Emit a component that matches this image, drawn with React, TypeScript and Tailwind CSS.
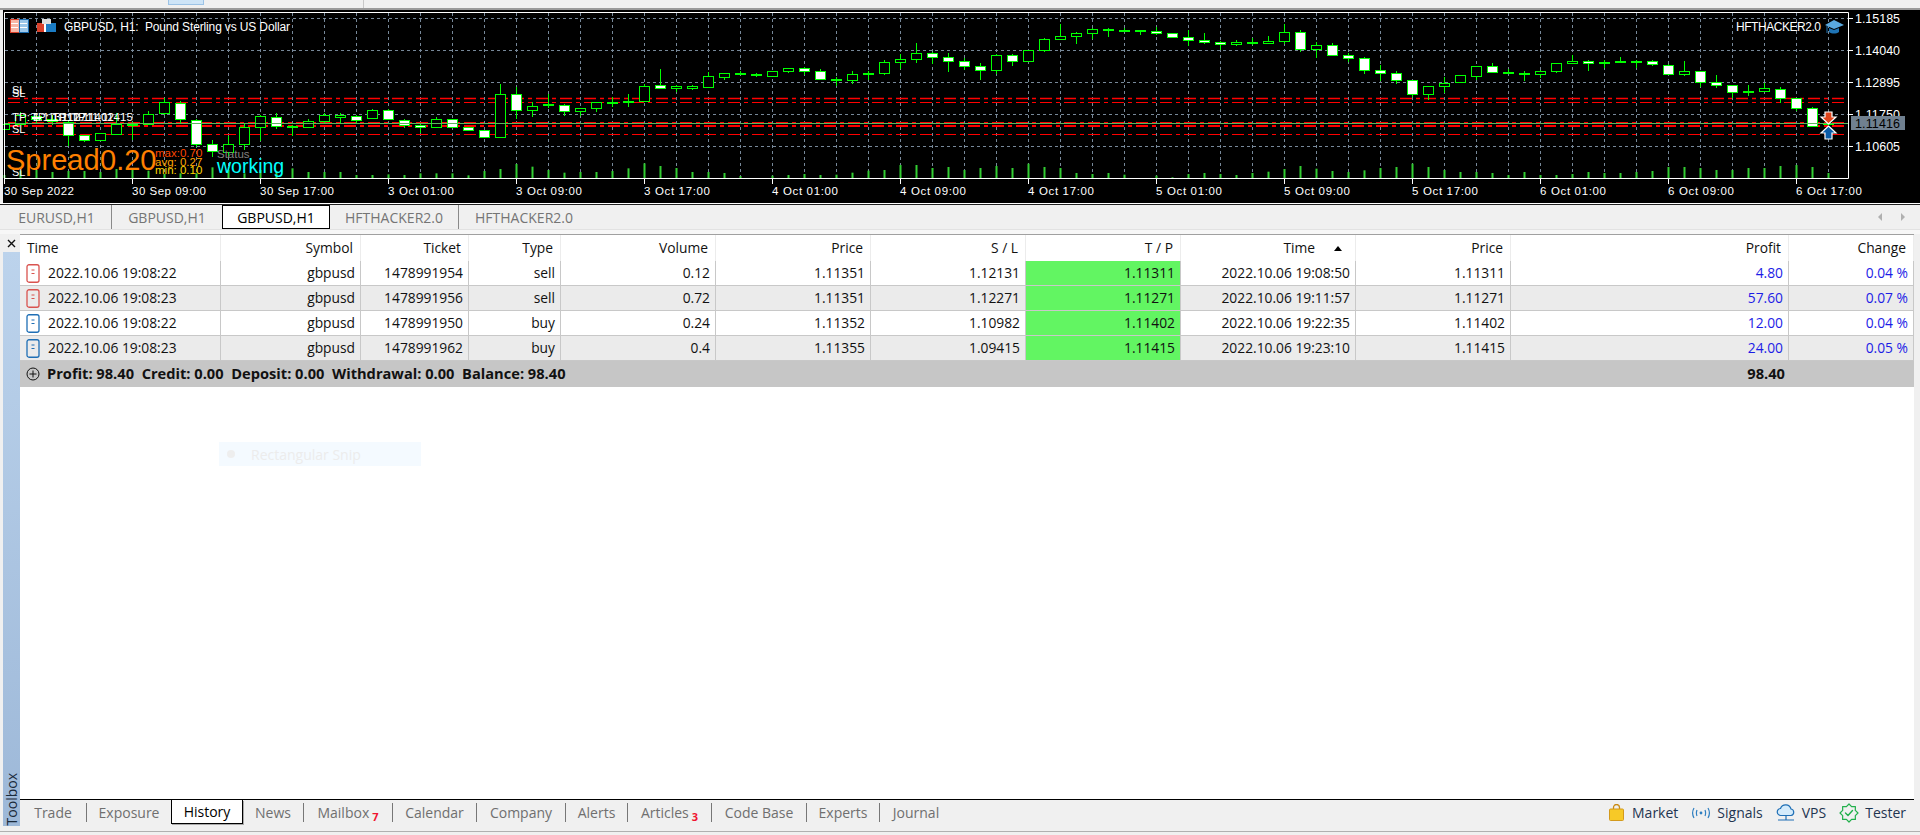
// candle data as read off the chart: [top, bottom, high, low, white], in 1/3 px
const candles: number[][] = [
  [372, 388, 372, 388, 0], [345, 372, 335, 372, 0], [347, 358, 340, 370, 1], [358, 364, 345, 375, 1], [365, 406, 362, 437, 1],
  [406, 421, 404, 426, 1], [400, 421, 398, 423, 0], [372, 401, 340, 405, 0], [372, 374, 365, 420, 0], [341, 373, 333, 376, 0],
  [307, 340, 295, 345, 0], [308, 358, 303, 372, 1], [359, 433, 357, 440, 1], [433, 454, 420, 470, 1], [433, 455, 408, 470, 0],
  [380, 433, 372, 450, 0], [349, 380, 345, 422, 0], [350, 379, 340, 387, 1], [379, 382, 375, 407, 0], [364, 382, 358, 385, 0],
  [346, 364, 340, 368, 0], [346, 350, 340, 368, 0], [349, 361, 345, 372, 1], [331, 355, 328, 358, 0], [331, 358, 328, 360, 1],
  [359, 376, 357, 383, 1], [376, 382, 372, 400, 1], [358, 382, 352, 384, 0], [358, 382, 356, 384, 1], [382, 391, 380, 393, 1],
  [391, 412, 390, 414, 1], [281, 412, 253, 414, 0], [281, 331, 262, 358, 1], [317, 331, 305, 352, 0], [313, 316, 283, 325, 0],
  [314, 334, 312, 347, 1], [325, 334, 325, 348, 0], [307, 325, 305, 336, 0], [306, 308, 290, 320, 0], [304, 307, 283, 322, 0],
  [257, 302, 252, 304, 0], [256, 263, 208, 266, 1], [258, 263, 254, 276, 0], [258, 263, 254, 270, 0], [229, 262, 217, 264, 0],
  [220, 230, 218, 240, 0], [219, 221, 214, 224, 0], [222, 224, 219, 231, 0], [214, 227, 212, 231, 0], [205, 214, 204, 218, 0],
  [205, 214, 202, 224, 1], [214, 238, 208, 240, 1], [238, 240, 232, 258, 0], [223, 239, 213, 251, 0], [220, 223, 213, 241, 0],
  [187, 220, 181, 224, 0], [178, 187, 163, 206, 0], [160, 178, 129, 189, 0], [160, 172, 155, 192, 1], [172, 184, 159, 216, 1],
  [184, 199, 175, 210, 1], [199, 211, 189, 240, 1], [166, 211, 163, 223, 0], [166, 184, 162, 197, 1], [151, 184, 150, 187, 0],
  [118, 151, 114, 155, 0], [109, 118, 73, 120, 0], [100, 109, 96, 132, 0], [88, 100, 84, 116, 0], [87, 91, 85, 110, 0],
  [90, 92, 84, 96, 0], [90, 92, 90, 105, 0], [94, 100, 82, 106, 1], [100, 112, 100, 113, 1], [112, 121, 90, 138, 1],
  [121, 127, 99, 131, 1], [127, 133, 124, 150, 1], [127, 133, 121, 137, 0], [127, 128, 113, 136, 0], [124, 128, 108, 129, 0],
  [95, 124, 72, 133, 0], [95, 148, 91, 157, 1], [136, 148, 125, 174, 0], [136, 166, 130, 168, 1], [166, 175, 160, 187, 1],
  [175, 211, 172, 222, 1], [211, 220, 195, 243, 1], [220, 241, 213, 251, 1], [241, 283, 240, 292, 1], [259, 283, 259, 300, 0],
  [248, 259, 232, 278, 0], [226, 247, 225, 249, 0], [199, 227, 199, 241, 0], [199, 217, 190, 218, 1], [216, 218, 208, 222, 0],
  [220, 223, 214, 243, 0], [214, 223, 210, 235, 0], [190, 214, 190, 219, 0], [184, 190, 166, 192, 0], [184, 190, 181, 213, 1],
  [186, 190, 181, 205, 0], [184, 187, 172, 190, 0], [182, 185, 181, 205, 0], [182, 193, 180, 197, 1], [194, 223, 191, 226, 1],
  [214, 223, 183, 228, 0], [214, 247, 212, 260, 1], [247, 256, 226, 263, 1], [256, 277, 255, 293, 1], [274, 277, 256, 288, 0],
  [265, 274, 248, 276, 0], [266, 295, 262, 310, 1], [295, 325, 295, 334, 1], [325, 379, 322, 380, 1], [370, 372, 366, 376, 0],
]

const volumes = [
  525, 512, 510, 516, 513, 513, 516, 507, 505, 512, 522, 520, 520, 502, 510, 520, 510, 515, 505, 516,
  516, 516, 525, 525, 523, 525, 520, 520, 520, 526, 513, 507, 492, 500, 510, 518, 516, 516, 513, 505,
  490, 498, 504, 516, 516, 519, 528, 534, 527, 525, 522, 525, 524, 518, 512, 510, 495, 495, 504, 501,
  510, 504, 498, 504, 491, 501, 504, 519, 522, 519, 524, 534, 527, 532, 522, 519, 522, 525, 519, 515,
  507, 498, 506, 513, 516, 511, 504, 501, 491, 501, 510, 516, 516, 519, 525, 516, 525, 525, 522, 516,
  519, 519, 516, 513, 501, 501, 504, 510, 510, 504, 504, 498, 495, 501, 519,
]

const timeLabels = [
  "30 Sep 2022", "30 Sep 09:00", "30 Sep 17:00", "3 Oct 01:00", "3 Oct 09:00", "3 Oct 17:00", "4 Oct 01:00", "4 Oct 09:00",
  "4 Oct 17:00", "5 Oct 01:00", "5 Oct 09:00", "5 Oct 17:00", "6 Oct 01:00", "6 Oct 09:00", "6 Oct 17:00",
]

const priceLabels = [
  { y: 18.5, text: "1.15185" },
  { y: 50.5, text: "1.14040" },
  { y: 82.5, text: "1.12895" },
  { y: 114.5, text: "1.11750" },
  { y: 146.5, text: "1.10605" },
]

function barX(i: number) {
  return 4.5 + 16 * i
}

function Chart() {
  const verticals = Array.from({ length: 58 }, (_, k) => 4.5 + 32 * k)
  return (
    <svg viewBox="3 10 1917 193" className="block h-[193px] w-[1917px] font-['Liberation_Sans',sans-serif]">
      <rect x="3" y="10" width="1917" height="193" fill="#000" />

      {/* grid */}
      {priceLabels.map((p) => (
        <line key={p.y} x1="5" x2="1848" y1={p.y} y2={p.y} stroke="#778899" strokeDasharray="3 3" />
      ))}
      {verticals.map((x) => (
        <line key={x} x1={x} x2={x} y1="13" y2="178" stroke="#778899" strokeDasharray="3 3" />
      ))}

      {/* volumes */}
      {volumes.map((v, i) => (
        <rect key={i} x={barX(i) - 1} y={v / 3} width="2" height={178 - v / 3} fill="#32cd32" />
      ))}

      {/* order levels */}
      <g stroke="#ff0000" strokeDasharray="12 4 4 4" fill="none">
        <line x1="8" x2="1847" y1="98.5" y2="98.5" strokeWidth="1.5" />
        <line x1="8" x2="1847" y1="102.5" y2="102.5" />
        <line x1="8" x2="1847" y1="123" y2="123" strokeWidth="2" />
        <line x1="8" x2="1847" y1="126" y2="126" strokeWidth="2" />
        <line x1="8" x2="1847" y1="134.5" y2="134.5" />
      </g>

      {/* candles */}
      {candles.map((c, i) => {
        const x = barX(i)
        const top = Math.round(c[0] / 3) + 0.5
        const bottom = Math.round(c[1] / 3) + 0.5
        return (
          <g key={i} stroke="#00ff00" shapeRendering="crispEdges">
            <line x1={x} x2={x} y1={c[2] / 3} y2={c[3] / 3} />
            <rect x={x - 5} y={top} width="10" height={bottom - top} fill={c[4] ? "#fff" : "#000"} strokeWidth="1.4" />
          </g>
        )
      })}
      <line x1="5" x2="1848" y1="123.5" y2="123.5" stroke="#5cb85c" />

      {/* frame */}
      <path d="M4.5 12.5H1848.5V178.5H4.5Z" fill="none" stroke="#fff" />
      {timeLabels.map((t, i) => (
        <g key={t}>
          <line x1={4.5 + 128 * i} x2={4.5 + 128 * i} y1="178" y2="184" stroke="#fff" />
          <text x={4 + 128 * i} y="194.5" fill="#fff" fontSize="11.5" textLength={t.length > 11 ? 74 : t.length === 11 && i === 0 ? 70 : 66}>
            {t}
          </text>
        </g>
      ))}
      {priceLabels.map((p) => (
        <g key={p.text}>
          <line x1="1849" x2="1853" y1={p.y} y2={p.y} stroke="#fff" />
          <text x="1855" y={p.y + 4.5} fill="#fff" fontSize="12.5" textLength="45">
            {p.text}
          </text>
        </g>
      ))}
      <rect x="1851" y="116" width="54" height="14" fill="#708090" />
      <text x="1855" y="127.5" fill="#000" fontSize="12.5" textLength="45">
        1.11416
      </text>

      {/* title */}
      <g shapeRendering="crispEdges">
        <rect x="10" y="19" width="9" height="13" fill="#f7b7a7" stroke="#d9402a" />
        <rect x="19" y="19" width="9" height="13" fill="#9cc7ea" stroke="#1b6cb0" />
        <path d="M11 23H18M11 27H18M20 23H27M20 27H27" stroke="#fff" />
        <rect x="37" y="23" width="7" height="9" fill="#d9402a" />
        <rect x="46" y="23" width="10" height="9" fill="#1b7cc4" />
        <rect x="42" y="19" width="9" height="5" fill="#ddd" />
        <rect x="44" y="24" width="2" height="8" fill="#fff" />
      </g>
      <text x="64" y="31" fill="#fff" fontSize="12" xmlSpace="preserve" textLength="226">
        GBPUSD, H1:  Pound Sterling vs US Dollar
      </text>
      <text x="1736" y="31" fill="#fff" fontSize="12" textLength="85">
        HFTHACKER2.0
      </text>
      <path d="M1825 25l9-5 10 5-10 4z" fill="#5aa9e0" />
      <path d="M1829 28v4c3 2 7 2 10 0v-4l-5 2z" fill="#1f74b5" />
      <line x1="1827" x2="1827" y1="26" y2="33" stroke="#1f74b5" />

      {/* trade arrows */}
      <path d="M1825 112h7v5h4l-7.5 7-7.5-7h4z" fill="#e0451c" stroke="#fff" strokeWidth="1.2" />
      <path d="M1828.5 126l7.5 7h-4v6h-7v-6h-4z" fill="#0b5ca8" stroke="#fff" strokeWidth="1.2" />

      {/* indicator text */}
      <text x="12" y="94" fill="#fff" fontSize="11">SL</text>
      <text x="12" y="97" fill="#fff" fontSize="11">SL</text>
      <text x="12" y="132.5" fill="#fff" fontSize="11">SL</text>
      <text x="12" y="175.5" fill="#fff" fontSize="11">SL</text>
      <text x="12" y="121" fill="#fff" fontSize="11.5">TP: 1.11311</text>
      <text x="31" y="121" fill="#fff" fontSize="11.5">TP: 1.11271</text>
      <text x="52" y="121" fill="#fff" fontSize="11.5">TP: 1.11402</text>
      <text x="71" y="121" fill="#fff" fontSize="11.5">TP: 1.11415</text>
      <text x="6" y="170" fill="#ff8000" fontSize="29">Spread</text>
      <text x="100" y="170" fill="#ff8000" fontSize="29">0.20</text>
      <text x="155" y="157" fill="#ff4500" fontSize="11.5">max:0.70</text>
      <text x="155" y="165.5" fill="#ffa500" fontSize="11.5">avg: 0.27</text>
      <text x="155" y="174" fill="#ffd700" fontSize="11.5">min: 0.10</text>
      <text x="217" y="158" fill="#808080" fontSize="11.5">Status</text>
      <text x="217" y="173" fill="#00ffff" fontSize="19.5">working</text>
    </svg>
  )
}

const chartTabs = [
  { label: "EURUSD,H1", cls: "w-[110px] border-r border-[#8a8a8a]" },
  { label: "GBPUSD,H1", cls: "w-[110px]" },
  { label: "GBPUSD,H1", cls: "w-[108px] bg-white text-black border border-black" },
  { label: "HFTHACKER2.0", cls: "w-[129px] border-r border-[#8a8a8a]" },
  { label: "HFTHACKER2.0", cls: "w-[130px]" },
]

const gridCols =
  "grid grid-cols-[201px_140px_108px_92px_155px_155px_155px_155px_175px_155px_278px_125px]"

const headers = ["Symbol", "Ticket", "Type", "Volume", "Price", "S / L", "T / P"]

const rows = [
  { side: "sell", open: "2022.10.06 19:08:22", ticket: "1478991954", vol: "0.12", price: "1.11351", sl: "1.12131", tp: "1.11311", close: "2022.10.06 19:08:50", profit: "4.80", change: "0.04 %" },
  { side: "sell", open: "2022.10.06 19:08:23", ticket: "1478991956", vol: "0.72", price: "1.11351", sl: "1.12271", tp: "1.11271", close: "2022.10.06 19:11:57", profit: "57.60", change: "0.07 %" },
  { side: "buy", open: "2022.10.06 19:08:22", ticket: "1478991950", vol: "0.24", price: "1.11352", sl: "1.10982", tp: "1.11402", close: "2022.10.06 19:22:35", profit: "12.00", change: "0.04 %" },
  { side: "buy", open: "2022.10.06 19:08:23", ticket: "1478991962", vol: "0.4", price: "1.11355", sl: "1.09415", tp: "1.11415", close: "2022.10.06 19:23:10", profit: "24.00", change: "0.05 %" },
]

function OrderIcon({ color }: { color: string }) {
  return (
    <svg width="14" height="19" viewBox="0 0 14 19" fill="none" stroke={color}>
      <rect x="1" y="0.75" width="12" height="17.5" rx="2" strokeWidth="1.3" />
      <path d="M5.5 6H8.5M5.5 9.5H8.5" strokeWidth="1.2" />
    </svg>
  )
}

function TesterIcon() {
  return (
    <svg width="20" height="20" viewBox="0 0 20 20" fill="none" stroke="#22b04c" strokeWidth="1.2" strokeLinejoin="round" strokeLinecap="round" className="mr-[6px] ml-[13px]">
      <path d="M10 1L12.6 3.7 16.4 3.6 16.3 7.4 19 10 16.3 12.6 16.4 16.4 12.6 16.3 10 19 7.4 16.3 3.6 16.4 3.7 12.6 1 10 3.7 7.4 3.6 3.6 7.4 3.7Z" />
      <path d="M6.5 10L9 12.5 13.5 7.5" strokeWidth="1.4" />
    </svg>
  )
}

function HeaderCell({ children }: { children: React.ReactNode }) {
  return <div className="flex items-center justify-end border-r border-[#ececec] pr-[7px]">{children}</div>
}

function Cell({ children, cls }: { children?: React.ReactNode; cls?: string }) {
  return (
    <div className={`flex items-center justify-end border-r border-b border-[#c8c8c8] pr-[5px] ${cls ?? ""}`}>{children}</div>
  )
}

function HistoryTable() {
  return (
    <div className="text-[13.8px] text-[#111]">
      <div className={`${gridCols} h-[26px] bg-white`}>
        <div className="flex items-center border-r border-[#ececec] pl-[7px]">Time</div>
        {headers.map((h) => (
          <HeaderCell key={h}>{h}</HeaderCell>
        ))}
        <div className="flex items-center justify-end gap-[19px] border-r border-[#ececec] pr-[13px]">
          <span>Time</span>
          <span className="h-0 w-0 border-x-[4px] border-b-[5px] border-x-transparent border-b-black" />
        </div>
        <HeaderCell>Price</HeaderCell>
        <HeaderCell>Profit</HeaderCell>
        <HeaderCell>Change</HeaderCell>
      </div>

      {rows.map((r, i) => (
        <div key={r.ticket} className={`${gridCols} h-[25px] ${i % 2 ? "bg-[#ebebeb]" : "bg-white"}`}>
          <div className="flex items-center gap-[8px] border-r border-b border-[#c8c8c8] pl-[6px]">
            <OrderIcon color={r.side === "sell" ? "#d9534f" : "#1f6fb5"} />
            <span>{r.open}</span>
          </div>
          <Cell>gbpusd</Cell>
          <Cell>{r.ticket}</Cell>
          <Cell>{r.side}</Cell>
          <Cell>{r.vol}</Cell>
          <Cell>{r.price}</Cell>
          <Cell>{r.sl}</Cell>
          <Cell cls="bg-[#62f562]">{r.tp}</Cell>
          <Cell>{r.close}</Cell>
          <Cell>{r.tp}</Cell>
          <Cell cls="text-[#1c1ce6]">{r.profit}</Cell>
          <Cell cls="text-[#1c1ce6]">{r.change}</Cell>
        </div>
      ))}

      <div className={`${gridCols} h-[26px] bg-[#c6c6c6] text-[14.65px] font-bold`}>
        <div className="col-span-10 flex items-center gap-[7px] pl-[6px]">
          <svg width="14" height="14" viewBox="0 0 14 14" fill="none" stroke="#111">
            <circle cx="7" cy="7" r="6" />
            <path d="M7 3.5V10.5M3.5 7H10.5" />
          </svg>
          <span className="whitespace-pre">
            {"Profit: 98.40  Credit: 0.00  Deposit: 0.00  Withdrawal: 0.00  Balance: 98.40"}
          </span>
        </div>
        <div className="flex items-center justify-end pr-[4px]">98.40</div>
      </div>
    </div>
  )
}

const toolTabs = [
  { label: "Trade", cls: "w-[66px]", sep: true },
  { label: "Exposure", cls: "w-[84px]", sep: false },
  { label: "History", cls: "w-[72px] bg-white text-black border-x border-b border-black shadow-[1px_1px_0_#aaa]", sep: false },
  { label: "News", cls: "w-[60px]", sep: true },
  { label: "Mailbox", cls: "w-[88px]", sep: true, badge: "7" },
  { label: "Calendar", cls: "w-[83px]", sep: true },
  { label: "Company", cls: "w-[88px]", sep: true },
  { label: "Alerts", cls: "w-[61px]", sep: true },
  { label: "Articles", cls: "w-[83px]", sep: true, badge: "3" },
  { label: "Code Base", cls: "w-[94px]", sep: true },
  { label: "Experts", cls: "w-[72px]", sep: true },
  { label: "Journal", cls: "w-[72px]", sep: false },
]

function BottomTabs() {
  return (
    <div className="flex h-[27px] items-start border-t border-black text-[14px] text-[#6f6f6f]">
      {toolTabs.map((t) => (
        <div key={t.label} className="flex items-center">
          <div className={`flex h-[24px] items-center justify-center ${t.cls}`}>
            <span>{t.label}</span>
            {t.badge && <span className="mt-[10px] ml-[3px] text-[11px] font-bold text-[#f0142f]">{t.badge}</span>}
          </div>
          {t.sep && <span className="h-[19px] w-px bg-[#777]" />}
        </div>
      ))}
      <div className="ml-auto flex h-[25px] items-center pr-[8px] text-[14px] text-[#1f3550]">
        <svg width="15" height="17" viewBox="0 0 15 17" className="mr-[8px]">
          <path d="M4.5 5V3.5a3 3 0 0 1 6 0V5" fill="none" stroke="#c98a12" strokeWidth="1.3" />
          <rect x="0.5" y="5" width="14" height="11.5" rx="1" fill="#f7c927" stroke="#d39a1c" />
        </svg>
        <span>Market</span>
        <svg width="20" height="12" viewBox="0 0 20 12" fill="none" stroke="#2f7fc1" strokeWidth="1.2" className="mr-[6px] ml-[13px]">
          <path d="M3 1C1.3 4 1.3 8 3 11M6 3C5.2 5 5.2 7 6 9M17 1C18.7 4 18.7 8 17 11M14 3C14.8 5 14.8 7 14 9" />
          <circle cx="10" cy="6" r="1.4" fill="#2f7fc1" stroke="none" />
        </svg>
        <span>Signals</span>
        <svg width="20" height="19" viewBox="0 0 20 19" fill="none" stroke="#1f6fb5" strokeWidth="1.2" className="mr-[6px] ml-[13px]">
          <path d="M5 12.5a3.5 3.5 0 0 1-.5-7 5.5 5.5 0 0 1 10.5 0.5 3.3 3.3 0 0 1 0 6.5z" fill="#d4ebfb" />
          <path d="M10 12.5V17M2 17H18" />
        </svg>
        <span>VPS</span>
        <TesterIcon />
        <span>Tester</span>
      </div>
    </div>
  )
}

export default function App() {
  return (
    <div className="relative flex h-[835px] w-full flex-col overflow-hidden bg-[#f0f0f0] font-['Open_Sans',sans-serif]">
      {/* window strip above the chart */}
      <div className="flex h-[8px] items-start pl-[168px]">
        <div className="h-[5px] w-[36px] border-x border-b border-[#9cc3e6] bg-[#cde4f7]" />
        <div className="ml-[159px] h-[8px] w-px bg-[#c8c8c8]" />
      </div>
      <div className="h-[2px] bg-[#9a9a9a]" />

      <div className="pl-[3px]">
        <Chart />
      </div>
      <div className="h-px bg-white" />
      <div className="h-px bg-[#222]" />

      {/* chart tabs */}
      <div className="flex h-[24px] items-stretch pl-[2px] text-[14px] text-[#757575]">
        {chartTabs.map((t, i) => (
          <div key={i} className={`flex items-center justify-center ${t.cls}`}>
            {t.label}
          </div>
        ))}
        <div className="ml-auto flex items-center gap-[19px] pr-[15px]">
          <span className="h-0 w-0 border-y-[4px] border-r-[4px] border-y-transparent border-r-[#b0b0b0]" />
          <span className="h-0 w-0 border-y-[4px] border-l-[4px] border-y-transparent border-l-[#b0b0b0]" />
        </div>
      </div>
      <div className="h-[5px] border-t border-[#e2e2e2] bg-[#f7f7f7]" />

      {/* toolbox */}
      <div className="flex h-[592px] flex-none">
        <div className="flex w-[20px] flex-col pl-[3px]">
          <div className="flex h-[18px] items-center justify-center pr-[1px]">
            <svg width="9" height="9" viewBox="0 0 9 9" stroke="#111" strokeWidth="1.4">
              <path d="M1 1L8 8M8 1L1 8" />
            </svg>
          </div>
          <div className="flex w-[17px] flex-1 items-end justify-center bg-linear-to-b from-[#bcd3ec] to-[#9db8d8] pb-[1px]">
            <span className="rotate-180 text-[14px] text-[#1a2a3a] [writing-mode:vertical-rl]">Toolbox</span>
          </div>
        </div>
        <div className="flex w-[1894px] flex-col">
          <div className="flex-1 overflow-hidden border-t border-[#a0a0a0] bg-white">
            <HistoryTable />
          </div>
          <BottomTabs />
        </div>
      </div>
      <div className="mt-[5px] h-px bg-[#b0b0b0]" />

      {/* faded snip tooltip */}
      <div className="absolute top-[442px] left-[219px] flex h-[24px] w-[202px] items-center bg-[#f4faff] pl-[8px] text-[14px] text-[#ececec]">
        <span className="mr-[16px] h-[8px] w-[8px] rounded-full bg-[#eeeeee]" />
        Rectangular Snip
      </div>
    </div>
  )
}
